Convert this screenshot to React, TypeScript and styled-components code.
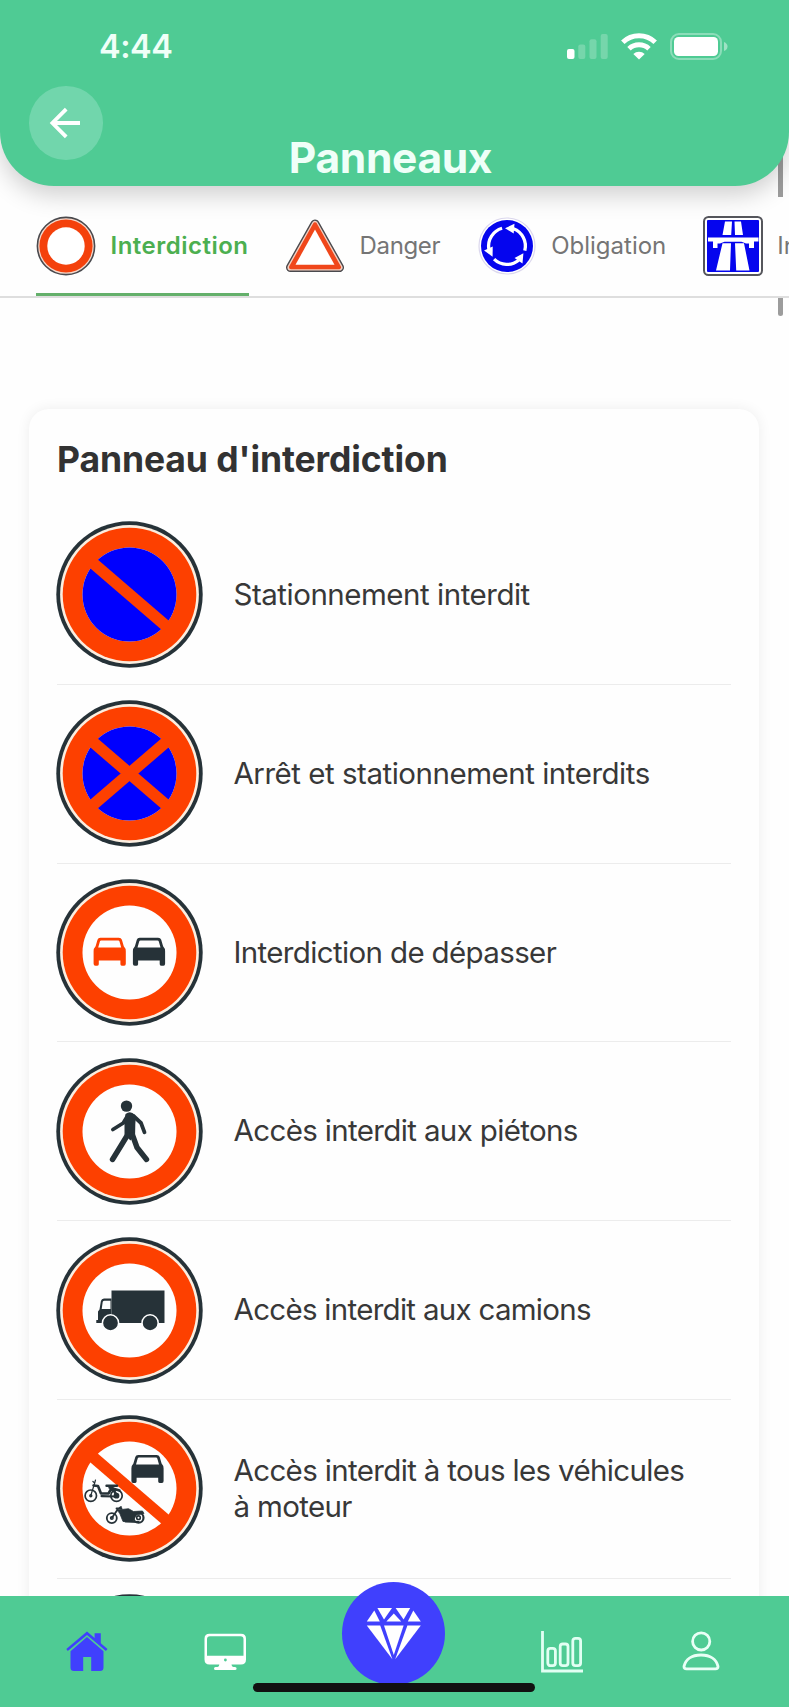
import React from "react";
import styled, { createGlobalStyle } from "styled-components";

const GREEN = "#4fcb94";
const ORANGE = "#fd4000";
const DARK = "#263238";
const BLUE = "#0000fe";
const MINT = "#effff8";

const GlobalStyle = createGlobalStyle`
  * { box-sizing: border-box; }
  body {
    margin: 0;
    background: #fff;
    font-family: Inter, "Liberation Sans", sans-serif;
    font-feature-settings: "calt" 0;
  }
`;

const Screen = styled.div`
  position: relative;
  display: flex;
  flex-direction: column;
  width: 789px;
  height: 1707px;
  overflow: hidden;
  background: #fefefe;
`;

const Header = styled.header`
  position: relative;
  z-index: 3;
  flex: none;
  display: flex;
  flex-direction: column;
  height: 185.5px;
  background: ${GREEN};
  border-radius: 0 0 54px 54px;
  box-shadow: 0 9px 24px rgba(0, 0, 0, 0.19);
`;

const StatusBar = styled.div`
  display: flex;
  justify-content: space-between;
  align-items: center;
  height: 86px;
  padding: 7px 61px 0 99px;
`;

const Clock = styled.span`
  font-size: 32.5px;
  font-weight: 600;
  line-height: 40px;
  letter-spacing: -0.5px;
  color: ${MINT};
`;

const StatusIcons = styled.div`
  display: flex;
  align-items: center;
  gap: 13px;
  svg { display: block; }
`;

const TitleBar = styled.div`
  display: grid;
  grid-template-columns: 73px 1fr 73px;
  padding: 0 29px;
`;

const BackButton = styled.button`
  display: grid;
  place-items: center;
  width: 73.5px;
  height: 73.5px;
  padding: 0 2px 0 0;
  border: 0;
  border-radius: 50%;
  background: #71d6ac;
`;

const Title = styled.h1`
  margin: 46px 0 0;
  padding-right: 8px;
  text-align: center;
  font-size: 42.5px;
  font-weight: 700;
  line-height: 52px;
  letter-spacing: -0.35px;
  color: ${MINT};
`;

const TabBar = styled.nav`
  position: relative;
  z-index: 1;
  flex: none;
  display: flex;
  gap: 36.5px;
  height: 112.5px;
  padding-left: 36px;
  border-bottom: 2px solid #dedede;
`;

const Tab = styled.div<{ $active?: boolean }>`
  position: relative;
  flex: none;
  display: flex;
  align-items: center;
  gap: 14.5px;
  padding-top: 10px;
  white-space: nowrap;
  font-size: 24px;
  font-weight: ${(p) => (p.$active ? 600 : 400)};
  color: ${(p) => (p.$active ? "#4caf50" : "#757575")};
  ${(p) => p.$active && "box-shadow: inset 0 -3px 0 #64b06b;"}
  svg { display: block; flex: none; }
`;

const TabLabel = styled.span<{ $spacing: number }>`
  letter-spacing: ${(p) => p.$spacing}px;
`;

const ScrollThumb = styled.div<{ $top: number; $height: number; $end?: boolean }>`
  position: absolute;
  top: ${(p) => p.$top}px;
  right: 6px;
  width: 5px;
  height: ${(p) => p.$height}px;
  background: #9c9c9c;
  border-radius: ${(p) => (p.$end ? "0 0 3px 3px" : "0")};
  z-index: 2;
`;

const Content = styled.main`
  flex: 1;
  min-height: 0;
  overflow: hidden;
  padding: 111px 29px 0;
`;

const Card = styled.section`
  width: 730px;
  padding: 27px 28px 0 28px;
  border-radius: 20px;
  background: #fefefe;
  box-shadow: 0 0 14px rgba(0, 0, 0, 0.07);
`;

const CardTitle = styled.h2`
  margin: 0 0 22px;
  font-size: 35.5px;
  font-weight: 700;
  line-height: 48px;
  letter-spacing: -0.1px;
  color: #323232;
`;

const SignRow = styled.div`
  display: flex;
  align-items: center;
  gap: 30.5px;
  height: 178.8px;
  border-bottom: 1.5px solid #ececec;
  svg { display: block; flex: none; margin-left: -1px; }
`;

const SignLabel = styled.span<{ $spacing: number }>`
  font-size: 29.5px;
  line-height: 35.7px;
  letter-spacing: ${(p) => p.$spacing}px;
  color: #383838;
  white-space: pre;
`;

const BottomNav = styled.footer`
  position: relative;
  z-index: 4;
  flex: none;
  display: grid;
  grid-template-columns: 174px 103px 233px 104px 174px;
  height: 111px;
  background: ${GREEN};
`;

const NavItem = styled.div`
  display: flex;
  justify-content: center;
  padding-top: 34px;
  svg { display: block; }
`;

const PremiumButton = styled.div`
  display: grid;
  place-items: center;
  justify-self: center;
  width: 103px;
  height: 103px;
  margin-top: -14px;
  border-radius: 50%;
  background: #4040fd;
`;

const HomeIndicator = styled.div`
  position: absolute;
  left: 253px;
  bottom: 15px;
  width: 282px;
  height: 9.5px;
  border-radius: 5px;
  background: #111;
`;

const SignalIcon = () => (
  <svg width="41" height="27" viewBox="0 0 41 27">
    <rect x="0" y="16" width="7.5" height="10" rx="2" fill="#fff" />
    <g fill="#fff" opacity="0.22">
      <rect x="11.3" y="11.5" width="7" height="14.5" rx="2" />
      <rect x="22.5" y="6.3" width="7" height="19.7" rx="2" />
      <rect x="33.7" y="1" width="7" height="25" rx="2" />
    </g>
  </svg>
);

const WifiIcon = () => (
  <svg width="36" height="27" viewBox="0 0 36 27" fill="none" stroke="#fff" strokeWidth="5">
    <path d="M1.8 9.3 A23.4 23.4 0 0 1 34.2 9.3" />
    <path d="M8 15.8 A14.6 14.6 0 0 1 28 15.8" />
    <path d="M18 26.5 L12.3 21 A8.5 8.5 0 0 1 23.7 21 Z" fill="#fff" stroke="none" />
  </svg>
);

const BatteryIcon = () => (
  <svg width="58" height="27" viewBox="0 0 58 27">
    <rect x="1" y="1" width="50" height="25" rx="8" fill="none" stroke="#fff" strokeOpacity="0.35" strokeWidth="2" />
    <rect x="4" y="4" width="44" height="19" rx="4.5" fill="#fff" />
    <path d="M54 9 Q57.5 10.5 57.5 13.5 Q57.5 16.5 54 18 Z" fill="#fff" opacity="0.45" />
  </svg>
);

const ArrowLeftIcon = () => (
  <svg width="32" height="32" viewBox="0 0 32 32" fill="none" stroke="#fff" strokeWidth="3.8">
    <path d="M31 16 H3.5 M17.2 2.2 L3.4 16 L17.2 29.8" />
  </svg>
);

const ProhibitionTabIcon = () => (
  <svg width="60" height="60" viewBox="-30 -30 60 60">
    <circle r="28.6" fill="#f6d9cc" stroke="#4a4a4e" strokeWidth="1.6" />
    <circle r="26.6" fill="#f4410c" />
    <circle r="18.7" fill="#fff" />
  </svg>
);

const DangerTabIcon = () => (
  <svg width="60" height="60" viewBox="0 0 60 60" strokeLinejoin="round">
    <path d="M30 8 L54.5 51.5 H5.5 Z" fill="#4a4a4e" stroke="#4a4a4e" strokeWidth="9" />
    <path d="M30 8 L54.5 51.5 H5.5 Z" fill="#f5cfc0" stroke="#f5cfc0" strokeWidth="6.2" />
    <path d="M30 8.3 L54 51.3 H6 Z" fill="#f0471b" stroke="#f0471b" strokeWidth="4" />
    <path d="M30 13.5 L49.5 48.8 H10.5 Z" fill="#fff" />
  </svg>
);

const RoundaboutArrow = ({ angle }: { angle: number }) => (
  <g transform={`rotate(${angle})`}>
    <path d="M6.5 -17.2 A18.4 18.4 0 0 1 17.8 4.6" fill="none" stroke="#fff" strokeWidth="3.3" />
    <path d="M-2 -17.8 L7.5 -22.2 L6.7 -12.6 Z" fill="#fff" />
  </g>
);

const ObligationTabIcon = () => (
  <svg width="60" height="60" viewBox="-30 -30 60 60">
    <circle r="28" fill="#fff" stroke="#dcd8ee" strokeWidth="1.2" />
    <circle r="26" fill="#0505ee" />
    {[0, 120, 240].map((a) => (
      <RoundaboutArrow key={a} angle={a} />
    ))}
  </svg>
);

const MotorwayTabIcon = () => (
  <svg width="60" height="60" viewBox="0 0 60 60">
    <rect x="1" y="1" width="58" height="58" rx="4.5" fill="#fff" stroke="#55565c" strokeWidth="2" />
    <rect x="4" y="4" width="52" height="52" rx="1" fill="#0505ee" />
    <g fill="#fff">
      <path d="M22 5.5 H29 L28.2 19 H19.5 Z M31.5 5.5 H38 L40 19 H32 Z" />
      <path d="M5 21.5 H55.5 V25.5 H51 V32 H46 V27.5 H43 L38.5 25.8 H21.5 L17 27.5 H14.5 V32 H10 V25.5 H5 Z" />
      <path d="M19.5 27.2 H28 L27 54.5 H13 Z M32 27.2 H41 L46.5 54.5 H33.2 Z" />
    </g>
  </svg>
);

type CarProps = { x: number; y: number; color: string };

const Car = ({ x, y, color }: CarProps) => (
  <g transform={`translate(${x} ${y})`} fill={color}>
    <path
      fillRule="evenodd"
      d="M7.2 0 H25.6 Q28 0 28.7 2 L30.6 8.5 Q32.6 10.5 32.6 13.5 V26 Q32.6 28 31 28 H29 Q27.4 28 27.2 26.4 V22.8 H5.6 V26.4 Q5.4 28 3.8 28 H2.2 Q0.4 28 0.4 26 V13.5 Q0.4 10.5 2.4 8.5 L4.3 2 Q4.9 0 7.2 0 Z M8 2.6 Q7 2.6 6.7 3.6 L5 9.6 H28 L26.3 3.6 Q26 2.6 25 2.6 Z"
    />
  </g>
);

const NoParking = () => (
  <>
    <circle r="47" fill={BLUE} />
    <rect x="-50" y="-5.8" width="100" height="11.6" fill={ORANGE} transform="rotate(40.7)" />
  </>
);

const NoStopping = () => (
  <>
    <NoParking />
    <rect x="-50" y="-5.8" width="100" height="11.6" fill={ORANGE} transform="rotate(-40.7)" />
  </>
);

const NoOvertaking = () => (
  <>
    <Car x={-36.3} y={-14.7} color={ORANGE} />
    <Car x={3} y={-14.7} color={DARK} />
  </>
);

const Pedestrian = () => (
  <g fill="none" stroke={DARK} strokeLinecap="round" strokeLinejoin="round">
    <circle cx="-3" cy="-25.4" r="5.7" fill={DARK} stroke="none" />
    <path
      d="M-4 -17.5 Q1 -21.5 5.5 -16.5 Q6.5 -14 5.8 -7 L5.6 3 L1 9 L-5 3 V-9 Z"
      fill={DARK}
      stroke="none"
    />
    <path d="M-2 -15.5 L-6.2 -8.5 L-16.6 -2" strokeWidth="3.8" />
    <path d="M4 -15.5 L11.5 -8.5 L15 0.8" strokeWidth="3.8" />
    <path d="M-2 3.5 L-9.3 15.5 L-17 28" strokeWidth="5.4" />
    <path d="M3 3.5 L7.5 16 L17 28" strokeWidth="5.4" />
  </g>
);

const Truck = () => (
  <g fill={DARK}>
    <rect x="-18" y="-20" width="53" height="32.5" />
    <path
      fillRule="evenodd"
      d="M-18 -12 H-25.5 Q-28 -12 -28.6 -9.5 L-30 -1 L-31.5 1 V9.5 H-33.2 V12.5 H-18 Z M-19 -9.8 H-25 Q-26.4 -9.8 -26.8 -8.4 L-27.8 -1.6 H-19 Z"
    />
    <circle cx="-19" cy="12.4" r="8.1" stroke="#fff" strokeWidth="1.5" />
    <circle cx="20.6" cy="12.4" r="8.1" stroke="#fff" strokeWidth="1.5" />
  </g>
);

const NoMotorVehicles = () => (
  <>
    <rect x="-50" y="-5.8" width="100" height="11.6" fill={ORANGE} transform="rotate(40.7)" />
    <Car x={1.5} y={-33.5} color={DARK} />
    <g stroke={DARK} fill="none" strokeLinecap="round" strokeLinejoin="round">
      <circle cx="-38.7" cy="7.2" r="5.7" strokeWidth="1.7" />
      <circle cx="-13" cy="7.2" r="5.7" strokeWidth="1.7" />
      <circle cx="-38.7" cy="7.2" r="1" strokeWidth="1.4" />
      <circle cx="-13" cy="7.2" r="2.2" fill={DARK} strokeWidth="1.4" />
      <path d="M-38.7 7 L-34.8 -5.5 L-36.6 -7 M-34.8 -5.5 L-34 -8.5" strokeWidth="1.2" />
      <path d="M-36 -3 L-31.5 -2.5 L-28.5 5 H-21 L-17.5 -1 L-13 6.5" strokeWidth="2.6" />
      <path d="M-23 -2.8 H-12.5 M-20 -1 L-10 2" strokeWidth="2.4" />
      <path d="M-28 7.6 L-13 8" strokeWidth="2.2" />
      <circle cx="-17.7" cy="29.6" r="5" strokeWidth="1.8" />
      <circle cx="9" cy="29.2" r="5" strokeWidth="2.2" />
      <circle cx="-17.7" cy="29.6" r="1.3" strokeWidth="1.4" />
      <circle cx="9" cy="29.2" r="1.8" strokeWidth="1.6" />
      <path d="M-17.7 29.6 L-11.5 20.5 L-8.5 18.5 M-13 20 H-8" strokeWidth="1.8" />
      <path
        d="M-12 21.5 L-1 20.2 L4 23 L13 22.5 L14.5 25 L7 26.5 L3 33 H-6.5 L-9.5 25.5 Z"
        fill={DARK}
        strokeWidth="0.8"
      />
      <path d="M-4 33 L9 33.4" strokeWidth="2" />
    </g>
  </>
);

type SignProps = { children?: React.ReactNode };

const RoundSign = ({ children }: SignProps) => (
  <svg width="147" height="147" viewBox="-73.5 -73.5 147 147">
    <circle r="73.2" fill={DARK} />
    <circle r="69.4" fill="#fbeee0" />
    <circle r="66.8" fill={ORANGE} />
    <circle r="47" fill="#fefefe" />
    {children}
  </svg>
);

const HouseIcon = () => (
  <svg width="42" height="42" viewBox="0 0 42 42" fill="#4040fd">
    <path d="M21 1.4 L0.3 19 L1.8 21 L21 5 L39.9 21 L41.5 19 L34.8 13.2 V3.2 H28.6 V7.9 Z" />
    <path d="M21 7 L37.5 21.2 V37.5 Q37.5 41 34 41 H25.2 V27 H17.2 V41 H8 Q4.5 41 4.5 37.5 V21.2 Z" />
  </svg>
);

const MonitorIcon = () => (
  <svg width="43" height="42" viewBox="0 0 43 42">
    <path
      fill="#fff"
      fillRule="evenodd"
      d="M5.5 3.8 H37 Q42 3.8 42 8.8 V29.5 Q42 34.5 37 34.5 H27.5 Q27.5 36.8 29.5 37 H31 Q32.6 37 32.6 38.5 Q32.6 40 31 40 H11.5 Q10 40 10 38.5 Q10 37 11.5 37 H13.5 Q15.3 36.8 15.3 34.5 H5.5 Q0.5 34.5 0.5 29.5 V8.8 Q0.5 3.8 5.5 3.8 Z M6 6.2 Q3 6.2 3 9.2 V25.8 H39.5 V9.2 Q39.5 6.2 36.5 6.2 Z"
    />
    <circle cx="21.4" cy="30" r="1.4" fill={GREEN} />
  </svg>
);

const DiamondIcon = () => (
  <svg width="56" height="54" viewBox="0 0 56 54" fill="#fff">
    <path d="M8.3 3.4 L0.8 14.6 H13.8 Z" />
    <path d="M11.4 1 H26 L18 12.6 Z" />
    <path d="M27.8 6.4 L20.4 14.6 H35.2 Z" />
    <path d="M29.6 1 H44.2 L37.6 12.6 Z" />
    <path d="M47.3 3.4 L41.8 14.6 H54.8 Z" />
    <path d="M0.8 18.6 H14.2 L26.4 52.3 Z" />
    <path d="M18 18.6 H37.6 L27.8 48 Z" />
    <path d="M41.4 18.6 H54.8 L29.2 52.3 Z" />
  </svg>
);

const ChartIcon = () => (
  <svg width="44" height="44" viewBox="0 0 44 44" fill="none" stroke="#e2fff3" strokeWidth="2.8">
    <path d="M2.5 1 V41 H43" />
    <rect x="7.8" y="18.3" width="7.6" height="17.4" rx="2.6" />
    <rect x="20.2" y="14" width="7.8" height="21.7" rx="2.6" />
    <rect x="32.8" y="8.3" width="7.8" height="27.4" rx="2.6" />
  </svg>
);

const PersonIcon = () => (
  <svg width="38" height="42" viewBox="0 0 38 42" fill="none" stroke="#e9fff6" strokeWidth="2.8">
    <circle cx="19.2" cy="11.4" r="8.6" />
    <path d="M4.5 38.8 H33.5 Q36 38.8 36 36.4 C34.5 29.5 28.5 25 19 25 C9.5 25 3.5 29.5 2 36.4 Q2 38.8 4.5 38.8 Z" />
  </svg>
);

const tabs = [
  { label: "Interdiction", icon: <ProhibitionTabIcon />, spacing: 0.5, active: true },
  { label: "Danger", icon: <DangerTabIcon />, spacing: -0.35 },
  { label: "Obligation", icon: <ObligationTabIcon />, spacing: 0 },
  { label: "Indication", icon: <MotorwayTabIcon />, spacing: 0 },
];

const signs = [
  { label: "Stationnement interdit", drawing: <NoParking />, spacing: -0.48 },
  { label: "Arrêt et stationnement interdits", drawing: <NoStopping />, spacing: -0.48 },
  { label: "Interdiction de dépasser", drawing: <NoOvertaking />, spacing: -0.64 },
  { label: "Accès interdit aux piétons", drawing: <Pedestrian />, spacing: -0.64 },
  { label: "Accès interdit aux camions", drawing: <Truck />, spacing: -0.71 },
  { label: "Accès interdit à tous les véhicules\nà moteur", drawing: <NoMotorVehicles />, spacing: -0.65 },
  { label: "", drawing: null, spacing: 0 },
];

export default function App() {
  return (
    <>
      <GlobalStyle />
      <Screen>
        <Header>
          <StatusBar>
            <Clock>4:44</Clock>
            <StatusIcons>
              <SignalIcon />
              <WifiIcon />
              <BatteryIcon />
            </StatusIcons>
          </StatusBar>
          <TitleBar>
            <BackButton aria-label="Retour">
              <ArrowLeftIcon />
            </BackButton>
            <Title>Panneaux</Title>
          </TitleBar>
        </Header>
        <TabBar>
          {tabs.map((t) => (
            <Tab key={t.label} $active={t.active}>
              {t.icon}
              <TabLabel $spacing={t.spacing}>{t.label}</TabLabel>
            </Tab>
          ))}
        </TabBar>
        <Content>
          <Card>
            <CardTitle>Panneau d'interdiction</CardTitle>
            {signs.map((s, i) => (
              <SignRow key={i}>
                <RoundSign>{s.drawing}</RoundSign>
                <SignLabel $spacing={s.spacing}>{s.label}</SignLabel>
              </SignRow>
            ))}
          </Card>
        </Content>
        <ScrollThumb $top={140} $height={57} />
        <ScrollThumb $top={298} $height={18} $end />
        <BottomNav>
          <NavItem><HouseIcon /></NavItem>
          <NavItem><MonitorIcon /></NavItem>
          <PremiumButton><DiamondIcon /></PremiumButton>
          <NavItem><ChartIcon /></NavItem>
          <NavItem><PersonIcon /></NavItem>
          <HomeIndicator />
        </BottomNav>
      </Screen>
    </>
  );
}
